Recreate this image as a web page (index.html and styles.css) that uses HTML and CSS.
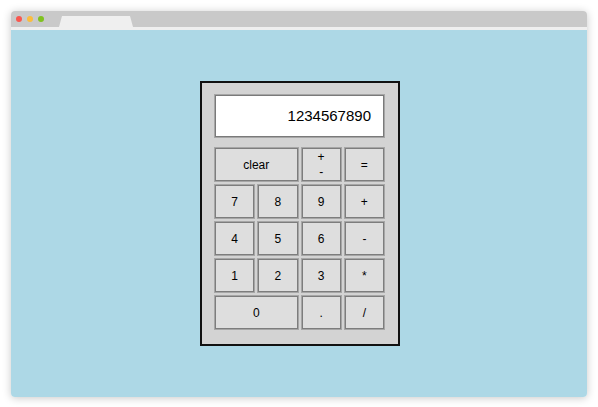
FILE: index.html
```html
<!DOCTYPE html>
<html>
<head>
<meta charset="utf-8">
<link rel="stylesheet" href="styles.css">
</head>
<body>
<div class="window">
  <div class="titlebar">
    <span class="dot red"></span>
    <span class="dot yellow"></span>
    <span class="dot green"></span>
    <div class="tab"></div>
  </div>
  <div class="strip"></div>
  <div class="content">
    <div class="calc">
      <div class="display">1234567890</div>
      <button class="key wide">clear</button>
      <button class="key pm">+<br>-</button>
      <button class="key">=</button>
      <button class="key">7</button>
      <button class="key">8</button>
      <button class="key">9</button>
      <button class="key">+</button>
      <button class="key">4</button>
      <button class="key">5</button>
      <button class="key">6</button>
      <button class="key">-</button>
      <button class="key">1</button>
      <button class="key">2</button>
      <button class="key">3</button>
      <button class="key">*</button>
      <button class="key wide">0</button>
      <button class="key">.</button>
      <button class="key">/</button>
    </div>
  </div>
</div>
</body>
</html>
```

FILE: styles.css
```css
html, body {
  margin: 0;
  padding: 0;
  background: #ffffff;
}
body {
  padding: 11px;
  font-family: "Liberation Sans", Arial, sans-serif;
}
.window {
  width: 576px;
  height: 386px;
  border-radius: 4px;
  overflow: hidden;
  box-shadow: 0 1px 8px rgba(0, 0, 0, 0.22);
  display: flex;
  flex-direction: column;
}
.titlebar {
  height: 16px;
  background: #c9c9c9;
  display: flex;
  align-items: center;
  padding-left: 5px;
  gap: 5px;
  position: relative;
}
.dot {
  width: 6px;
  height: 6px;
  border-radius: 50%;
}
.red { background: #f9574f; }
.yellow { background: #fbbd3e; }
.green { background: #7fc21f; }
.tab {
  position: absolute;
  left: 48px;
  bottom: 0;
  width: 74px;
  height: 11px;
  background: #efefef;
  clip-path: polygon(3px 0, 71px 0, 74px 100%, 0 100%);
}
.strip {
  height: 3px;
  background: #efefef;
}
.content {
  flex: 1;
  background: #add8e6;
  display: flex;
  align-items: center;
  justify-content: center;
  padding-left: 2px;
}
.calc {
  width: 171px;
  box-sizing: content-box;
  padding: 11px 13px 14px 12px;
  border: 2px solid #111;
  background: #d3d3d3;
  display: grid;
  grid-template-columns: repeat(4, 1fr);
  grid-template-rows: auto repeat(5, 35px);
  column-gap: 2px;
  row-gap: 2px;
}
.display {
  grid-column: 1 / span 4;
  height: 44px;
  box-sizing: border-box;
  margin-bottom: 7px;
  background: #fff;
  border: 1px solid #a6a6a6;
  box-shadow: inset 0 0 0 1px #7a7a7a;
  text-align: right;
  font-size: 15px;
  line-height: 42px;
  padding-right: 13px;
  color: #000;
}
.key {
  margin: 0;
  padding: 0;
  font-family: "Liberation Sans", Arial, sans-serif;
  font-size: 12px;
  color: #000;
  background: #dedede;
  border: 1px solid #a6a6a6;
  box-shadow: inset 0 0 0 1px #7d7d7d;
  line-height: 14px;
}
.wide {
  grid-column: span 2;
}
.pm {
  line-height: 15px;
}
```
